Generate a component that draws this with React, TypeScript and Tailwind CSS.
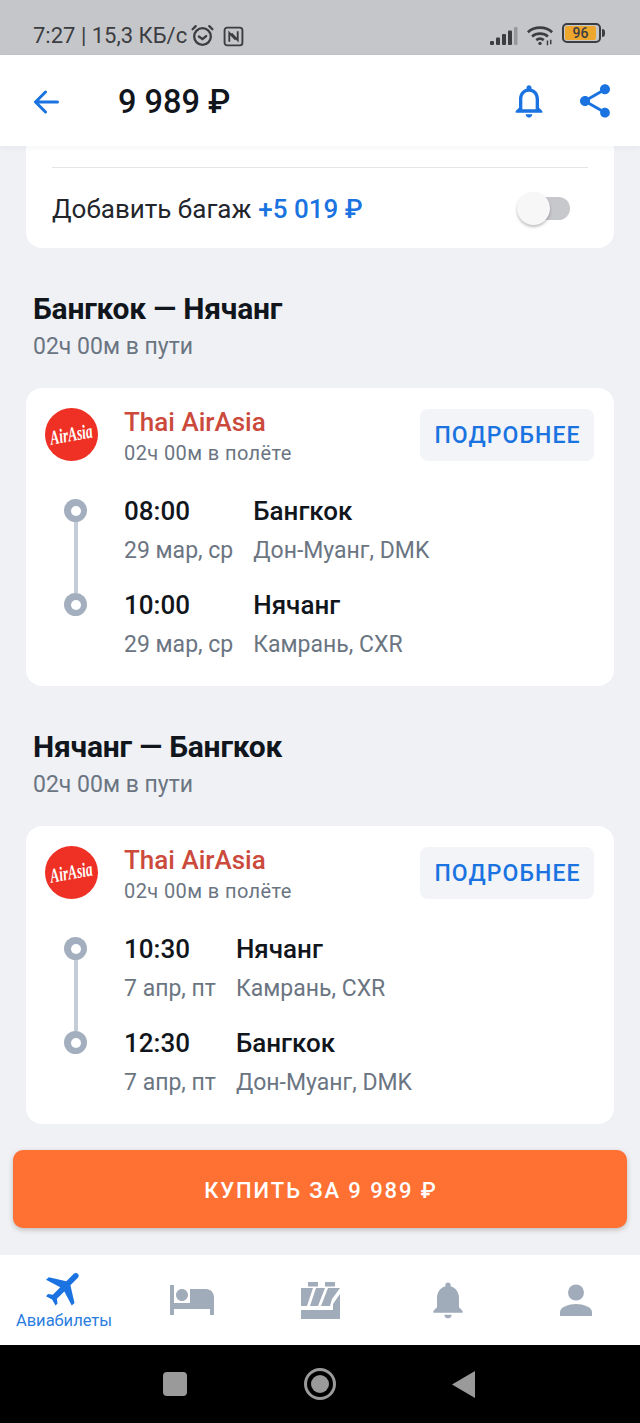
const font = { fontFamily: "Roboto, sans-serif" }

const Ruble = "₽"

const AirAsiaLogo = () => (
  <svg viewBox="0 0 53 53" className="h-[53px] w-[53px] shrink-0">
    <circle cx="26.5" cy="26.5" r="26.5" fill="#ee3124" />
    <text
      textAnchor="middle"
      fill="#fff"
      fontSize="13.5"
      fontStyle="italic"
      fontWeight="700"
      fontFamily="'Liberation Serif', serif"
      transform="rotate(-10 26.5 28) translate(26.5 33) scale(1 1.5)"
    >
      AirAsia
    </text>
  </svg>
)

interface Leg {
  time: string
  date: string
  city: string
  airport: string
}

const LegDetails = ({ time, date, city, airport }: Leg) => (
  <>
    <div className="flex h-10 items-center pt-px text-[26px] font-medium text-[#11151c]">{time}</div>
    <div className="flex h-10 items-center pt-px text-[26px] font-medium text-[#11151c]">{city}</div>
    <div className="flex h-10 items-center whitespace-nowrap pt-px text-[23px] text-[#6b7582]">{date}</div>
    <div className="flex h-10 items-center whitespace-nowrap pt-px text-[23px] text-[#6b7582]">{airport}</div>
  </>
)

const Dot = () => (
  <div className="flex h-[23px] w-[23px] items-center justify-center rounded-full bg-[#a3afbe]">
    <div className="h-[10px] w-[10px] rounded-full bg-white" />
  </div>
)

const FlightSection = ({ title, legs }: { title: string; legs: Leg[] }) => (
  <section>
    <div className="px-[33px] pt-[42px]">
      <h2 className="flex h-9 items-center whitespace-nowrap text-[30px] font-bold tracking-[-0.2px] text-[#11151c]">{title}</h2>
      <p className="mt-[5px] flex h-[30px] items-center pt-[2px] text-[23px] text-[#6b7582]">02ч 00м в пути</p>
    </div>
    <div className="mx-[26px] mt-[27px] rounded-2xl bg-white pb-[21px] pr-5 pl-[19px] pt-5">
      <div className="flex h-[53px] items-start gap-[26px]">
        <AirAsiaLogo />
        <div>
          <div className="flex h-[27px] items-center text-[26px] font-medium leading-none text-[#cb4a3c]">Thai AirAsia</div>
          <div className="mt-[5px] flex h-[26px] items-center text-[20px] tracking-[0.4px] text-[#6b7582]">02ч 00м в полёте</div>
        </div>
        <button className="ml-auto mt-px flex h-[52px] w-[174px] items-center justify-center rounded-lg bg-[#f2f4f7] pt-[3px] pl-[1px] text-[23px] font-medium tracking-[1.1px] text-[#1a73e0]">
          ПОДРОБНЕЕ
        </button>
      </div>
      <div className="mt-[30px] flex">
        <div className="ml-[19px] mt-2 flex w-[23px] flex-col items-center self-start">
          <Dot />
          <div className="h-[71px] w-1 bg-[#c3ccd7]" />
          <Dot />
        </div>
        <div className="ml-[37px] grid grid-cols-[auto_1fr] gap-x-5">
          <LegDetails {...legs[0]} />
          <div className="col-span-2 h-[14px]" />
          <LegDetails {...legs[1]} />
        </div>
      </div>
    </div>
  </section>
)

export default function App() {
  return (
    <div className="flex h-[1423px] w-[640px] flex-col overflow-hidden bg-[#eff1f5]" style={font}>
      {/* status bar */}
      <div className="flex h-[55px] items-end bg-[#c5c6ca] pb-[3px] pl-[33px] pr-[35px] text-[#3b3d41]">
        <span className="whitespace-nowrap text-[22px] leading-[32px]">7:27 | 15,3 КБ/с</span>
        <svg viewBox="0 0 24 24" className="ml-[3px] mb-[4px] h-[25px] w-[25px]" fill="none" stroke="currentColor" strokeWidth="2.2" strokeLinecap="round">
          <circle cx="12" cy="13" r="8" />
          <path d="M8.500 13l3.500 2.500 3.500-3M2.500 6l3-3M21.500 6l-3-3" />
        </svg>
        <svg viewBox="0 0 20 20" className="ml-[8px] mb-[5px] h-[21px] w-[21px]" fill="none" stroke="currentColor" strokeWidth="1.800">
          <rect x="1.500" y="1.500" width="17" height="17" rx="2.500" />
          <path d="M6 15V6.500l6 6.500M14 5v8.500L8 7" />
        </svg>
        <svg viewBox="0 0 28 20" className="ml-auto mb-[6px] h-[20px] w-[28px]" fill="#3b3d41">
          <rect x="0" y="15" width="4" height="4" rx="1" />
          <rect x="6" y="11.500" width="4" height="7.500" rx="1" />
          <rect x="12" y="8" width="4" height="11" rx="1" />
          <rect x="18" y="4.500" width="4" height="14.500" rx="1" />
          <rect x="24" y="1" width="3.500" height="18" rx="1" fill="#96989c" />
        </svg>
        <svg viewBox="0 0 30 24" className="ml-[8px] mb-[5px] h-[24px] w-[28px]" fill="none" stroke="#3b3d41" strokeWidth="2.800">
          <path d="M2 9c7-6.500 19-6.500 26 0M6.500 13.500c4.500-4 12.500-4 17 0M11 17.500c2.500-2 5.500-2 8 0" />
          <circle cx="15" cy="21" r="1.800" fill="#3b3d41" stroke="none" />
          <path d="M23 18v5M26.500 17v5" strokeWidth="1.600" />
        </svg>
        <div className="ml-[8px] mb-[9px] flex items-center">
          <div className="flex h-[20px] w-[39px] items-center rounded-[5px] border-2 border-[#3b3d41] p-px">
            <div className="flex h-full w-[31px] items-center justify-center rounded-[2px] bg-[#eda72d] text-[14px] font-medium leading-none text-[#3b3d41]">96</div>
          </div>
          <div className="ml-px h-[8px] w-[3px] rounded-r-sm bg-[#3b3d41]" />
        </div>
      </div>

      {/* header */}
      <header className="relative z-10 flex h-[91px] items-center bg-white pl-[33px] pr-[25px] shadow-[0_2px_6px_rgba(40,50,70,0.05)]">
        <svg viewBox="0 0 26 24" className="mt-[2px] h-[24px] w-[26px] text-[#1a73e0]" fill="none" stroke="currentColor" strokeWidth="3" strokeLinecap="round" strokeLinejoin="round">
          <path d="M24.500 12H2.500M12.500 2L2.500 12l10 10" />
        </svg>
        <div className="ml-[59px] mt-[3px] text-[32.500px] font-medium text-[#11151c]">9 989 {Ruble}</div>
        <svg viewBox="0 0 24 24" className="ml-auto h-[40px] w-[40px] text-[#1a73e0]" fill="currentColor">
          <path d="M12 22c1.100 0 2-.9 2-2h-4c0 1.100.89 2 2 2zm6-6v-5c0-3.070-1.640-5.640-4.500-6.320V4c0-.83-.67-1.500-1.500-1.500s-1.500.67-1.500 1.500v.68C7.630 5.360 6 7.920 6 11v5l-2 2v1h16v-1l-2-2zm-2 1H8v-6c0-2.480 1.510-4.500 4-4.500s4 2.020 4 4.500v6z" />
        </svg>
        <svg viewBox="0 0 24 24" className="ml-[26px] h-[40px] w-[40px] text-[#1a73e0]" fill="currentColor">
          <path d="M18 16.080c-.76 0-1.440.3-1.960.77L8.910 12.700c.05-.23.09-.46.09-.7s-.04-.47-.09-.7l7.050-4.110c.54.5 1.250.81 2.040.81 1.660 0 3-1.340 3-3s-1.340-3-3-3-3 1.340-3 3c0 .24.04.47.09.7L8.040 9.810C7.500 9.310 6.790 9 6 9c-1.660 0-3 1.340-3 3s1.340 3 3 3c.79 0 1.500-.31 2.040-.81l7.120 4.160c-.05.21-.08.43-.08.65 0 1.610 1.310 2.920 2.920 2.920 1.610 0 2.920-1.310 2.920-2.920s-1.310-2.920-2.920-2.920z" />
        </svg>
      </header>

      {/* scrolling content */}
      <main className="flex-1 overflow-hidden">
        <div className="mx-[26px] h-[102px] rounded-b-2xl bg-white px-[26px] pt-[21px]">
          <div className="h-px bg-[#e3e5e8]" />
          <div className="mt-[19px] flex h-[42px] items-center">
            <span className="pt-[2px] text-[26px] text-[#22262c]">Добавить багаж</span>
            <span className="ml-[7px] pt-[2px] text-[26px] font-medium text-[#1a73e0]">+5 019 {Ruble}</span>
            <div className="relative ml-auto mr-[18px] h-[23px] w-[44px] rounded-full bg-[#c6c8cc]">
              <div className="absolute -left-[9px] -top-[5px] h-[33px] w-[33px] rounded-full bg-[#f7f7f7] shadow-[0_2px_3px_rgba(0,0,0,0.25)]" />
            </div>
          </div>
        </div>

        <FlightSection
          title="Бангкок — Нячанг"
          legs={[
            { time: "08:00", date: "29 мар, ср", city: "Бангкок", airport: "Дон-Муанг, DMK" },
            { time: "10:00", date: "29 мар, ср", city: "Нячанг", airport: "Камрань, CXR" },
          ]}
        />
        <FlightSection
          title="Нячанг — Бангкок"
          legs={[
            { time: "10:30", date: "7 апр, пт", city: "Нячанг", airport: "Камрань, CXR" },
            { time: "12:30", date: "7 апр, пт", city: "Бангкок", airport: "Дон-Муанг, DMK" },
          ]}
        />

        <button className="mx-[13px] mt-[26px] flex h-[78px] w-[614px] items-center justify-center rounded-[10px] bg-[#ff7033] pt-[2px] pl-[2px] text-[22px] font-medium tracking-[1.9px] text-white shadow-[0_2px_5px_rgba(60,40,20,0.25)]">
          КУПИТЬ ЗА 9 989 {Ruble}
        </button>
      </main>

      {/* bottom tabs */}
      <nav className="grid h-[90px] grid-cols-5 bg-white text-[#a1acba]">
        <div className="flex flex-col items-center pt-[10px] text-[#1a73e0]">
          <svg viewBox="0 0 24 24" className="ml-[2px] h-[46px] w-[46px] rotate-45" fill="currentColor">
            <path d="M21 16v-2l-8-5V3.500c0-.83-.67-1.500-1.500-1.500S10 2.670 10 3.500V9l-8 5v2l8-2.500V19l-2 1.500V22l3.500-1 3.500 1v-1.500L13 19v-5.500l8 2.500z" />
          </svg>
          <span className="text-[16.500px] leading-5 text-[#2b7de0]">Авиабилеты</span>
        </div>
        <div className="flex items-center justify-center">
          <svg viewBox="1 5 22 15" className="mt-[-1px] h-[30px] w-[44px]" fill="currentColor">
            <path d="M7 13c1.660 0 3-1.340 3-3S8.660 7 7 7s-3 1.340-3 3 1.340 3 3 3zm12-6h-8v7H3V5H1v15h2v-3h18v3h2v-9c0-2.210-1.790-4-4-4z" />
          </svg>
        </div>
        <div className="flex items-center justify-center">
          <svg viewBox="0 0 39 37" className="h-[37px] w-[39px]" fill="currentColor">
            <rect x="7" y="0" width="10" height="4.500" />
            <rect x="24" y="0" width="10" height="4.500" />
            <path d="M0 6H12L6 24H0Z" />
            <path d="M15 6H24L17 24H9Z" />
            <path d="M27 6H39L31 17L29 24H20Z" />
            <path d="M0 28H32V22L39 12V37H0Z" />
          </svg>
        </div>
        <div className="flex items-center justify-center">
          <svg viewBox="0 0 24 24" className="h-[44px] w-[44px]" fill="currentColor">
            <path d="M12 22c1.100 0 2-.9 2-2h-4c0 1.100.9 2 2 2zm6-6v-5c0-3.070-1.630-5.640-4.500-6.320V4c0-.83-.67-1.500-1.500-1.500s-1.500.67-1.500 1.500v.68C7.640 5.360 6 7.920 6 11v5l-2 2v1h16v-1l-2-2z" />
          </svg>
        </div>
        <div className="flex items-center justify-center">
          <svg viewBox="0 0 32 32" className="h-[32px] w-[32px]" fill="currentColor">
            <circle cx="16" cy="8.500" r="8" />
            <path d="M0 32v-4c0-5 9-8 16-8s16 3 16 8v4z" />
          </svg>
        </div>
      </nav>

      {/* system nav */}
      <div className="flex h-[78px] items-center bg-black pl-[163px]">
        <div className="h-[24px] w-[24px] rounded-[4px] bg-[#9a9a9a]" />
        <div className="ml-[117px] flex h-[32px] w-[32px] items-center justify-center rounded-full border-[3px] border-[#9a9a9a]">
          <div className="h-[18px] w-[18px] rounded-full bg-[#9a9a9a]" />
        </div>
        <svg viewBox="0 0 23 27" className="ml-[116px] h-[27px] w-[23px]" fill="#9a9a9a">
          <path d="M23 0v27L0 13.500z" />
        </svg>
      </div>
    </div>
  )
}
